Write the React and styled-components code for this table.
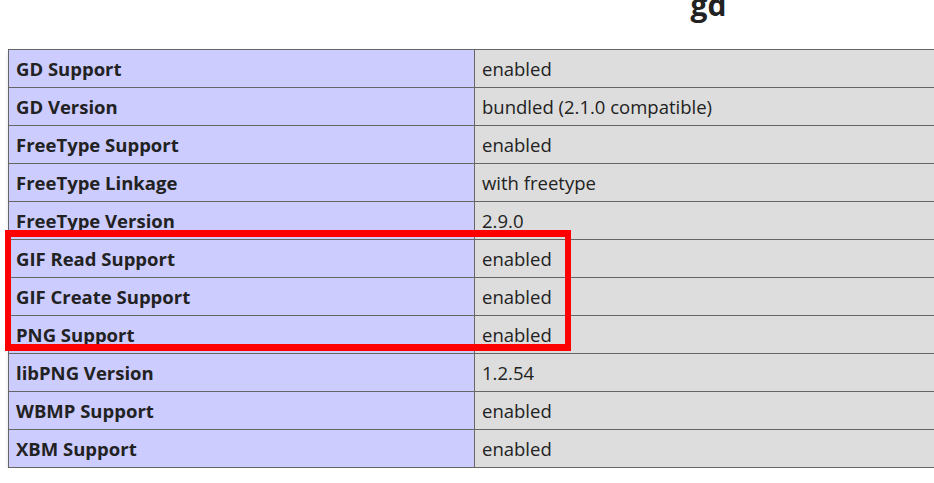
import React from "react";
import styled, { createGlobalStyle } from "styled-components";

const Global = createGlobalStyle`
  html, body { margin: 0; padding: 0; overflow: hidden; background: #fff; }
  body { font-family: "Open Sans", "Noto Sans", sans-serif; color: #222; }
`;

const Page = styled.div`
  padding: 0 8px;
  width: 1401px;
`;

const Title = styled.h2`
  margin: -15px 0 24px;
  font-size: 30px;
  line-height: 40px;
  font-weight: bold;
  text-align: center;
  color: #222;
`;

const TableWrap = styled.div`
  position: relative;
`;

const Table = styled.table`
  border-collapse: collapse;
  width: 1401px;
  box-shadow: 1px 3px 4px #ccc;
`;

const Cell = styled.td`
  border: 1px solid #666;
  padding: 6px 7px;
  font-size: 18.5px;
  line-height: 25px;
  vertical-align: baseline;
  background: ${(p) => (p.$key ? "#ccf" : "#ddd")};
  font-weight: ${(p) => (p.$key ? "bold" : "normal")};
  width: ${(p) => (p.$key ? "451px" : "auto")};
  color: #222;
`;

const Highlight = styled.div`
  position: absolute;
  left: -3px;
  top: 181px;
  width: 566px;
  height: 121px;
  box-sizing: border-box;
  border: 6px solid #ff0000;
  border-top-width: 7px;
  border-bottom-width: 7px;
  pointer-events: none;
`;

const rows = [
  ["GD Support", "enabled"],
  ["GD Version", "bundled (2.1.0 compatible)"],
  ["FreeType Support", "enabled"],
  ["FreeType Linkage", "with freetype"],
  ["FreeType Version", "2.9.0"],
  ["GIF Read Support", "enabled"],
  ["GIF Create Support", "enabled"],
  ["PNG Support", "enabled"],
  ["libPNG Version", "1.2.54"],
  ["WBMP Support", "enabled"],
  ["XBM Support", "enabled"],
];

export default function App() {
  return (
    <>
      <Global />
      <Page>
        <Title>gd</Title>
        <TableWrap>
          <Table>
            <tbody>
              {rows.map(([k, v]) => (
                <tr key={k}>
                  <Cell $key>{k}</Cell>
                  <Cell>{v}</Cell>
                </tr>
              ))}
            </tbody>
          </Table>
          <Highlight />
        </TableWrap>
      </Page>
    </>
  );
}
